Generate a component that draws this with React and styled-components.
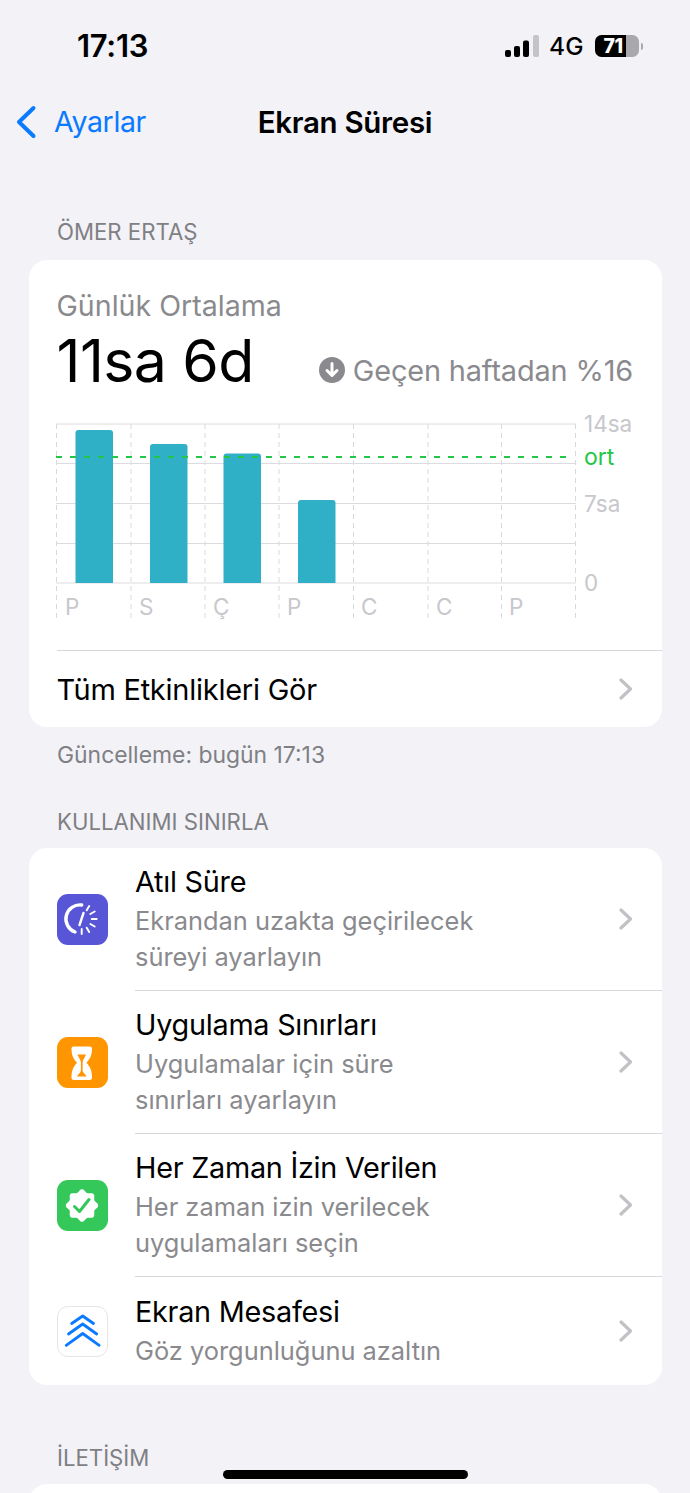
import React from "react";
import styled, { createGlobalStyle } from "styled-components";

const Global = createGlobalStyle`
  html, body { margin: 0; padding: 0; background: #f2f2f7; }
  body { font-family: Inter, "Noto Sans", "Liberation Sans", sans-serif; -webkit-font-smoothing: antialiased; }
`;

const Page = styled.div`
  position: relative; width: 690px; height: 1493px; overflow: hidden; background: #f2f2f7; color: #000;
`;
const StatusBar = styled.div`
  display: flex; align-items: center; justify-content: space-between;
  height: 32px; padding: 30px 47px 0 77px;
`;
const Time = styled.span`font-size: 31px; font-weight: 600; letter-spacing: -0.3px; line-height: 32px;`;
const StatusRight = styled.div`display: flex; align-items: center;`;
const NetLabel = styled.span`font-size: 24.5px; font-weight: 500; margin: 0 11px 0 10px; line-height: 32px;`;
const Battery = styled.div`
  width: 44px; height: 22px; border-radius: 6.5px; display: flex; align-items: center; padding-left: 9px; box-sizing: border-box;
  background: linear-gradient(90deg, #000 0 71%, #a9a9ad 71% 100%);
  color: #fff; font-size: 19.5px; font-weight: 800; letter-spacing: -0.5px; line-height: 22px;
`;
const BatteryTip = styled.div`width: 2.5px; height: 7px; margin-left: 2px; border-radius: 0 2px 2px 0; background: #a9a9ad;`;

const NavBar = styled.div`
  display: grid; grid-template-columns: 1fr auto 1fr; align-items: center; height: 40px; margin-top: 40px; padding-left: 15px; padding-right: 15px;
`;
const BackLink = styled.div`display: flex; align-items: center; gap: 17px; color: #0a7aff; font-size: 28.5px; letter-spacing: -0.35px; line-height: 40px;`;
const NavTitle = styled.div`font-size: 29.5px; font-weight: 600; letter-spacing: -0.3px; line-height: 40px;`;

const SectionLabel = styled.div`
  margin: ${p => p.$top}px 0 0 57px; font-size: 22.2px; line-height: 28px; color: #7f7f84;
`;
const Card = styled.div`
  margin: ${p => p.$top}px 28.5px 0; background: #fff; border-radius: 18px; overflow: hidden;
`;
const Summary = styled.div`padding: 29px 28.5px 0 28px;`;
const SummaryLabel = styled.div`font-size: 28.6px; line-height: 34px; color: #8a8a8e;`;
const StatRow = styled.div`display: flex; align-items: flex-end; justify-content: space-between; margin-top: 7px; height: 62px;`;
const BigValue = styled.div`font-size: 59px; line-height: 62px; letter-spacing: -0.6px; font-weight: 400;`;
const Delta = styled.div`display: flex; align-items: center; gap: 8px; height: 44px; color: #8a8a8e; font-size: 28.9px; letter-spacing: -0.15px;`;
const ChartSvg = styled.svg`display: block; width: 584px; height: 215px; margin: 18px 0 0 -0.5px;`;
const ChartText = styled.text`font-family: Inter, "Noto Sans", sans-serif; font-size: ${p => p.$size || 22.5}px; fill: ${p => p.$color || "#c7c7cc"};`;

const ActionRow = styled.div`
  display: flex; align-items: center; justify-content: space-between; height: 77px; margin: 25px 0 0 28px; padding-right: 29px;
  border-top: 1px solid #d8d8dc; box-sizing: border-box; font-size: 29px; letter-spacing: -0.25px;
`;
const Footnote = styled.div`margin: 14px 0 0 57px; font-size: 22.9px; line-height: 28px; color: #7f7f84;`;

const Row = styled.div`display: flex; align-items: center; height: ${p => p.$h}px; padding-left: 28px;`;
const IconBox = styled.div`
  flex: none; width: 51px; height: 51px; border-radius: 11px; background: ${p => p.$bg}; box-sizing: border-box;
  display: flex; align-items: center; justify-content: center;
  ${p => p.$outlined ? "border: 1px solid #e5e5ea;" : ""}
`;
const RowBody = styled.div`
  flex: 1; align-self: stretch; display: flex; align-items: center; justify-content: space-between;
  margin-left: 27.5px; padding-right: 29px; box-sizing: border-box;
  border-bottom: ${p => p.$last ? "none" : "1px solid #d8d8dc"};
`;
const RowTitle = styled.div`font-size: 28.8px; line-height: 36px; letter-spacing: -0.25px;`;
const RowSub = styled.div`font-size: 25.4px; line-height: 36px; color: #8a8a8e; margin-top: 3px; white-space: pre-line;`;
const HomeBar = styled.div`
  position: absolute; left: 223px; top: 1470px; width: 245px; height: 9px; border-radius: 5px; background: #000;
`;

const Chevron = () => (
  <svg width="14" height="22" viewBox="0 0 14 22" fill="none"><path d="M2 2l9.5 9L2 20" stroke="#c2c2c6" strokeWidth="3.2" strokeLinecap="round" strokeLinejoin="round" /></svg>
);

const Signal = () => (
  <svg width="34" height="22" viewBox="0 0 34 22">
    <rect x="0" y="15" width="6" height="7" rx="2" fill="#000" />
    <rect x="9" y="11" width="6" height="11" rx="2" fill="#000" />
    <rect x="18" y="5.5" width="6" height="16.5" rx="2" fill="#000" />
    <rect x="28" y="0" width="6" height="22" rx="2" fill="#c4c4c8" />
  </svg>
);

const BackChevron = () => (
  <svg width="22" height="34" viewBox="0 0 22 34" fill="none"><path d="M18.5 3L4 17l14.5 14" stroke="#0a7aff" strokeWidth="4" strokeLinecap="round" strokeLinejoin="round" /></svg>
);

const DownBadge = () => (
  <svg width="26" height="26" viewBox="0 0 26 26">
    <circle cx="13" cy="13" r="13" fill="#8a8a8e" />
    <path d="M13 6.5v12M8 13.5l5 5 5-5" fill="none" stroke="#fff" strokeWidth="3" strokeLinecap="round" strokeLinejoin="round" />
  </svg>
);

const ticks = [30, 60, 90, 120, 150, 180];
const DowntimeIcon = () => (
  <svg width="51" height="51" viewBox="0 0 51 51" fill="none" stroke="#fff" strokeLinecap="round">
    <path d="M24.7 11A14 14 0 0 0 18 38" strokeWidth="3.4" />
    <path d="M26.5 19L22.5 31" strokeWidth="2.4" />
    {ticks.map(a => (
      <line key={a} x1="24.7" y1="15" x2="24.7" y2="10" strokeWidth="1.9" transform={`rotate(${a} 24.7 25)`} />
    ))}
  </svg>
);
const HourglassIcon = () => (
  <svg width="51" height="51" viewBox="0 0 51 51">
    <path d="M16.500 9.500H33a2 2 0 0 1 2 2c0 6.500-1.500 10-5.600 14.200C33.500 30 35 33.500 35 40.500a2.500 2.500 0 0 1-2.500 2.500H17a2.500 2.500 0 0 1-2.500-2.500c0-7 1.500-10.500 5.600-14.800C16 21.500 14.500 18 14.500 11.500a2 2 0 0 1 2-2z" fill="#fff" />
    <path d="M20.500 17.500h8.500c-.5 2-2.800 4.500-3.400 7.500v9c.6 2 2.500 3 3.900 5.400h-9.500c1.400-2.400 3.300-3.400 3.900-5.400v-9c-.6-3-2.900-5.500-3.400-7.500z" fill="#ff9500" />
  </svg>
);
const badgePath = (() => {
  const pts = [];
  for (let i = 0; i < 180; i++) {
    const t = (i / 180) * Math.PI * 2;
    const r = 14.8 + 1.4 * Math.cos(8 * t);
    pts.push(`${(25 + r * Math.sin(t)).toFixed(2)} ${(25.5 - r * Math.cos(t)).toFixed(2)}`);
  }
  return `M${pts.join("L")}Z`;
})();
const BadgeIcon = () => (
  <svg width="51" height="51" viewBox="0 0 51 51">
    <path d={badgePath} fill="#fff" />
    <path d="M17.500 26.500l5 5 9.500-12" fill="none" stroke="#34c759" strokeWidth="3" strokeLinecap="round" strokeLinejoin="round" />
  </svg>
);
const DistanceIcon = () => (
  <svg width="51" height="51" viewBox="0 0 51 51" fill="none" stroke="#0a7aff" strokeWidth="2.800" strokeLinecap="round" strokeLinejoin="round" style={{ margin: -1 }}>
    <path d="M14.700 17.500L25.700 10l10.800 7.500" />
    <path d="M11.500 28L25.700 18l14 10" />
    <path d="M9.200 39.300L25.700 27.500l16.500 11.800" />
  </svg>
);

const hLines = [424, 463.5, 503.5, 543.5, 583];
const vLines = [56.5, 131, 205, 279, 353.5, 428, 501.5, 575.5];
const bars = [[75.5, 430], [150, 444], [223.5, 453.5], [298, 500]];
const days = ["P", "S", "Ç", "P", "C", "C", "P"];
const dayX = [65, 139, 213, 287, 361, 436, 509];

const Chart = () => (
  <ChartSvg viewBox="56 410 584 215">
    {vLines.map(x => <line key={x} x1={x} x2={x} y1="424" y2="620" stroke="#d9d9dd" strokeWidth="1" strokeDasharray="5 4" />)}
    {hLines.map(y => <line key={y} x1="56" x2="576" y1={y} y2={y} stroke="#dcdce0" strokeWidth="1" />)}
    {bars.map(([x, top]) => (
      <path key={x} d={`M${x} 583V${top + 3}a3 3 0 0 1 3-3h31.500a3 3 0 0 1 3 3V583z`} fill="#30b0c7" />
    ))}
    <line x1="56" x2="573" y1="457" y2="457" stroke="#22c747" strokeWidth="2" strokeDasharray="6 8" />
    {days.map((d, i) => <ChartText key={i} x={dayX[i]} y="615">{d}</ChartText>)}
    <ChartText x="584" y="432">14sa</ChartText>
    <ChartText x="584" y="465" $color="#22c747" $size="23">ort</ChartText>
    <ChartText x="584" y="512">7sa</ChartText>
    <ChartText x="584" y="591">0</ChartText>
  </ChartSvg>
);

const limits = [
  { h: 143, title: "Atıl Süre", sub: "Ekrandan uzakta geçirilecek\nsüreyi ayarlayın", bg: "#5856d6", icon: <DowntimeIcon /> },
  { h: 143, title: "Uygulama Sınırları", sub: "Uygulamalar için süre\nsınırları ayarlayın", bg: "#ff9500", icon: <HourglassIcon /> },
  { h: 143, title: "Her Zaman İzin Verilen", sub: "Her zaman izin verilecek\nuygulamaları seçin", bg: "#34c759", icon: <BadgeIcon /> },
  { h: 108, title: "Ekran Mesafesi", sub: "Göz yorgunluğunu azaltın", bg: "#fff", outlined: true, icon: <DistanceIcon />, last: true },
];

export default function App() {
  return (
    <Page>
      <Global />
      <StatusBar>
        <Time>17:13</Time>
        <StatusRight>
          <Signal />
          <NetLabel>4G</NetLabel>
          <Battery>71</Battery>
          <BatteryTip />
        </StatusRight>
      </StatusBar>
      <NavBar>
        <BackLink><BackChevron />Ayarlar</BackLink>
        <NavTitle>Ekran Süresi</NavTitle>
        <span />
      </NavBar>
      <SectionLabel $top={76}>ÖMER ERTAŞ</SectionLabel>
      <Card $top={14}>
        <Summary>
          <SummaryLabel>Günlük Ortalama</SummaryLabel>
          <StatRow>
            <BigValue>11sa 6d</BigValue>
            <Delta><DownBadge />Geçen haftadan %16</Delta>
          </StatRow>
          <Chart />
        </Summary>
        <ActionRow>Tüm Etkinlikleri Gör<Chevron /></ActionRow>
      </Card>
      <Footnote>Güncelleme: bugün 17:13</Footnote>
      <SectionLabel $top={39}>KULLANIMI SINIRLA</SectionLabel>
      <Card $top={12}>
        {limits.map(l => (
          <Row key={l.title} $h={l.h}>
            <IconBox $bg={l.bg} $outlined={l.outlined}>{l.icon}</IconBox>
            <RowBody $last={l.last}>
              <div>
                <RowTitle>{l.title}</RowTitle>
                <RowSub>{l.sub}</RowSub>
              </div>
              <Chevron />
            </RowBody>
          </Row>
        ))}
      </Card>
      <SectionLabel $top={59}>İLETİŞİM</SectionLabel>
      <Card $top={12}><Row $h={60} /></Card>
      <HomeBar />
    </Page>
  );
}
